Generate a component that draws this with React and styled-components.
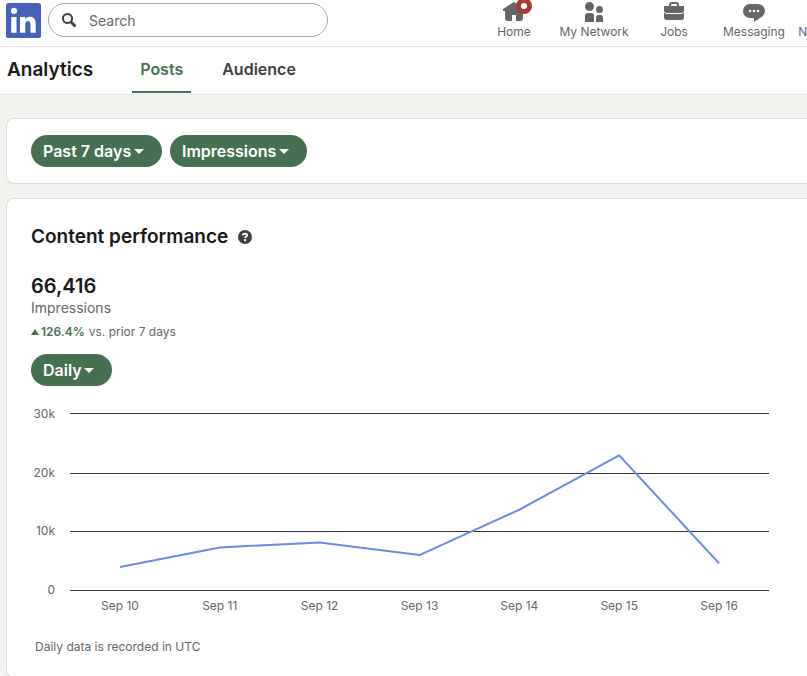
import React from 'react';
import styled, { createGlobalStyle } from 'styled-components';

const navItems = [
    {
        label: 'Home',
        badge: true,
        path: 'M23 9v2h-2v7a3 3 0 01-3 3h-4v-6h-4v6H6a3 3 0 01-3-3v-7H1V9l11-7z',
    },
    {
        label: 'My Network',
        path: 'M12 16v6H3v-6a3 3 0 013-3h3a3 3 0 013 3zm5.5-3A3.5 3.5 0 1014 9.5a3.5 3.5 0 003.5 3.5zm1 2h-2a2.5 2.5 0 00-2.5 2.5V22h7v-4.5a2.5 2.5 0 00-2.5-2.5zM7.5 2A4.5 4.5 0 1012 6.5 4.49 4.49 0 007.5 2z',
    },
    {
        label: 'Jobs',
        path: 'M17 6V5a3 3 0 00-3-3h-4a3 3 0 00-3 3v1H2v4a3 3 0 003 3h14a3 3 0 003-3V6zM9 5a1 1 0 011-1h4a1 1 0 011 1v1H9zm10 9a4 4 0 003-1.38V17a3 3 0 01-3 3H5a3 3 0 01-3-3v-4.38A4 4 0 005 14z',
    },
    {
        label: 'Messaging',
        path: 'M16 4H8a7 7 0 000 14h4v4l8.16-5.39A6.78 6.78 0 0023 11a7 7 0 00-7-7zm-8 8.25A1.25 1.25 0 119.25 11 1.25 1.25 0 018 12.25zm4 0A1.25 1.25 0 1113.25 11 1.25 1.25 0 0112 12.25zm4 0A1.25 1.25 0 1117.25 11 1.25 1.25 0 0116 12.25z',
    },
    {
        label: 'Notifications',
        path: 'M22 19h-8.3a2 2 0 11-3.4 0H2v-1a5 5 0 012-4l1-7a7 7 0 0114 0l1 7a5 5 0 012 4z',
    },
];

const points = [
    { day: 'Sep 10', value: 4000 },
    { day: 'Sep 11', value: 7300 },
    { day: 'Sep 12', value: 8150 },
    { day: 'Sep 13', value: 6000 },
    { day: 'Sep 14', value: 13700 },
    { day: 'Sep 15', value: 22900 },
    { day: 'Sep 16', value: 4600 },
];

const gridLines = [0.5, 60.5, 118.5, 177.5];
const toY = (value) => 177.5 - (value / 30000) * 177;

const Dropdown = ({ label, options }) => (
    <Pill>
        <select aria-label={label}>
            {options.map((option) => <option key={option}>{option}</option>)}
        </select>
        <svg viewBox="0 0 16 16" width="16" height="16" aria-hidden="true">
            <path d="M8 11L3 6h10z" fill="currentColor" />
        </svg>
    </Pill>
)

const Header = () => (
    <TopBar>
        <LogoLink href="#" aria-label="LinkedIn">
            <svg viewBox="2 2 20 20" width="35" height="35">
                <path fill="currentColor" d="M20.5 2h-17A1.5 1.5 0 002 3.5v17A1.5 1.5 0 003.5 22h17a1.5 1.5 0 001.5-1.5v-17A1.5 1.5 0 0020.5 2zM8 19H5v-9h3zM6.5 8.25A1.75 1.75 0 118.3 6.5a1.78 1.78 0 01-1.8 1.75zM19 19h-3v-4.74c0-1.42-.6-1.93-1.38-1.93A1.74 1.74 0 0013 14.19a.66.66 0 000 .14V19h-3v-9h2.9v1.3a3.11 3.11 0 012.7-1.4c1.55 0 3.36.86 3.36 3.66z" />
            </svg>
        </LogoLink>
        <SearchBox>
            <svg viewBox="0 0 16 16" width="16" height="16" aria-hidden="true">
                <path fill="currentColor" d="M14.56 12.44L11.3 9.18a5.51 5.51 0 10-2.12 2.12l3.26 3.26a1.5 1.5 0 102.12-2.12zM3 6.5A3.5 3.5 0 116.5 10 3.5 3.5 0 013 6.5z" />
            </svg>
            <input type="text" placeholder="Search" aria-label="Search" />
        </SearchBox>
        <MainNav>
            {navItems.map(({ label, path, badge }) => (
                <NavItem key={label} href="#">
                    <svg viewBox="0 0 24 24" width="24" height="24" aria-hidden="true">
                        <path fill="currentColor" d={path} />
                    </svg>
                    {badge && <Badge />}
                    <span>{label}</span>
                </NavItem>
            ))}
        </MainNav>
    </TopBar>
)

const Chart = () => (
    <ChartGrid>
        <YAxis>
            <span>30k</span>
            <span>20k</span>
            <span>10k</span>
            <span>0</span>
        </YAxis>
        <Plot viewBox="0 0 700 178" preserveAspectRatio="none" role="img" aria-label="Impressions per day">
            {gridLines.map((y) => (
                <line key={y} x1="0" x2="700" y1={y} y2={y} stroke="#333" vectorEffect="non-scaling-stroke" />
            ))}
            <polyline
                points={points.map((point, i) => `${50 + i * 100},${toY(point.value)}`).join(' ')}
                fill="none"
                stroke="#668de5"
                strokeWidth="2"
                strokeLinejoin="round"
                vectorEffect="non-scaling-stroke"
            />
        </Plot>
        <XAxis>
            {points.map((point) => <span key={point.day}>{point.day}</span>)}
        </XAxis>
    </ChartGrid>
)

const App = () => {
    return (
        <>
            <GlobalStyle />
            <Header />
            <SubNav>
                <h1>Analytics</h1>
                <Tab href="#" $active>Posts</Tab>
                <Tab href="#">Audience</Tab>
            </SubNav>
            <Content>
                <FilterCard>
                    <Dropdown label="Time range" options={['Past 7 days']} />
                    <Dropdown label="Metric" options={['Impressions']} />
                </FilterCard>
                <PerformanceCard>
                    <CardTitle>
                        <h2>Content performance</h2>
                        <button aria-label="Help">
                            <svg viewBox="0 0 14 14" width="14" height="14">
                                <circle cx="7" cy="7" r="7" fill="currentColor" />
                                <path d="M4.7 5.5C4.7 4.2 5.7 3.7 7 3.7s2.2.6 2.2 1.6c0 1.3-2 1.2-2 2.7" fill="none" stroke="#fff" strokeWidth="1.9" />
                                <circle cx="7.1" cy="10.2" r="1.1" fill="#fff" />
                            </svg>
                        </button>
                    </CardTitle>
                    <Total>66,416</Total>
                    <Metric>Impressions</Metric>
                    <Change>
                        <svg viewBox="0 0 8 6" width="8" height="6" aria-hidden="true">
                            <path d="M4 0l4 6H0z" fill="currentColor" />
                        </svg>
                        <strong>126.4%</strong>
                        <span>vs. prior 7 days</span>
                    </Change>
                    <Dropdown label="Interval" options={['Daily']} />
                    <Chart />
                    <Note>Daily data is recorded in UTC</Note>
                </PerformanceCard>
            </Content>
        </>
    )
}

const GlobalStyle = createGlobalStyle`
  * {
    box-sizing: border-box;
  }
  body {
    margin: 0;
    background-color: #f3f2ee;
    color: #191919;
    font-family: Inter, "Liberation Sans", sans-serif;
    overflow-x: hidden;
  }
  h1, h2, p {
    margin: 0;
  }
  a {
    text-decoration: none;
  }
  svg {
    display: block;
  }
`

const TopBar = styled.header`
  display: flex;
  height: 47px;
  padding-left: 6px;
  background-color: #fff;
  border-bottom: 1px solid #e6e6e6;
  overflow: hidden;
`

const LogoLink = styled.a`
  flex-shrink: 0;
  margin-top: 3px;
  color: #4862b9;
`

const SearchBox = styled.div`
  display: flex;
  align-items: center;
  flex-shrink: 0;
  gap: 12px;
  width: 280px;
  height: 34px;
  margin: 3px 0 0 7px;
  padding: 0 12px;
  border: 1px solid #a6a6a6;
  border-radius: 17px;
  color: #404040;
  input {
    flex: 1;
    min-width: 0;
    padding: 0;
    border: none;
    outline: none;
    background: none;
    font-family: inherit;
    font-size: 14px;
    color: #191919;
  }
  input::placeholder {
    color: #666;
    opacity: 1;
  }
`

const MainNav = styled.nav`
  display: flex;
  flex-shrink: 0;
  margin-left: 146px;
`

const NavItem = styled.a`
  position: relative;
  display: flex;
  flex-direction: column;
  align-items: center;
  width: 80px;
  color: #666;
  font-size: 12px;
  line-height: 16px;
  white-space: nowrap;
`

const Badge = styled.i`
  position: absolute;
  top: -2px;
  left: 42px;
  width: 16px;
  height: 16px;
  border: 5px solid #a93a32;
  border-radius: 50%;
  background-color: #fff;
`

const SubNav = styled.nav`
  display: flex;
  height: 48px;
  padding-left: 7px;
  background-color: #fff;
  border-bottom: 1px solid #e6e6e4;
  h1 {
    margin-right: 39px;
    font-size: 19px;
    font-weight: 600;
    line-height: 46px;
  }
`

const Tab = styled.a`
  margin-right: 23px;
  padding: 0 8px;
  height: 46px;
  border-bottom: 2px solid ${({ $active }) => ($active ? '#467151' : 'transparent')};
  color: ${({ $active }) => ($active ? '#467151' : '#404040')};
  font-size: 16px;
  font-weight: 600;
  line-height: 44px;
`

const Content = styled.main`
  display: flex;
  flex-direction: column;
  gap: 14px;
  padding: 23px 0 0 6px;
`

const Card = styled.section`
  background-color: #fff;
  border: 1px solid #dfdeda;
  border-right: none;
  border-radius: 8px 0 0 8px;
`

const FilterCard = styled(Card)`
  display: flex;
  gap: 8px;
  padding: 16px 24px;
`

const PerformanceCard = styled(Card)`
  padding: 24px 38px 22px 24px;
`

const Pill = styled.div`
  position: relative;
  width: fit-content;
  color: #fff;
  select {
    display: block;
    appearance: none;
    height: 32px;
    padding: 0 30px 0 12px;
    border: none;
    border-radius: 16px;
    background-color: #467151;
    color: inherit;
    font-family: inherit;
    font-size: 16px;
    font-weight: 600;
    cursor: pointer;
  }
  svg {
    position: absolute;
    top: 8px;
    right: 15px;
    pointer-events: none;
  }
`

const CardTitle = styled.div`
  display: flex;
  align-items: center;
  gap: 10px;
  h2 {
    font-size: 19px;
    font-weight: 600;
    line-height: 28px;
  }
  button {
    padding: 0;
    border: none;
    background: none;
    color: #404040;
    cursor: pointer;
  }
`

const Total = styled.p`
  margin-top: 23px;
  font-size: 20px;
  font-weight: 600;
  line-height: 24px;
`

const Metric = styled.p`
  color: #666;
  font-size: 14px;
  line-height: 20px;
`

const Change = styled.p`
  display: flex;
  align-items: center;
  margin: 6px 0 14px;
  color: #666;
  font-size: 12px;
  line-height: 16px;
  svg, strong {
    color: #467151;
  }
  strong {
    margin: 0 4px 0 2px;
    font-weight: 600;
  }
`

const ChartGrid = styled.div`
  display: grid;
  grid-template-columns: 24px minmax(0, 1fr);
  column-gap: 15px;
  margin-top: 27px;
  color: #666;
  font-size: 12px;
  line-height: 16px;
`

const YAxis = styled.div`
  display: flex;
  flex-direction: column;
  justify-content: space-between;
  margin: -7px 0;
  text-align: right;
`

const Plot = styled.svg`
  width: 100%;
  height: 178px;
`

const XAxis = styled.div`
  grid-column: 2;
  display: grid;
  grid-template-columns: repeat(7, 1fr);
  margin-top: 7px;
  text-align: center;
`

const Note = styled.p`
  margin: 25px 0 0 4px;
  color: #666;
  font-size: 12px;
  line-height: 16px;
`

export default App;
